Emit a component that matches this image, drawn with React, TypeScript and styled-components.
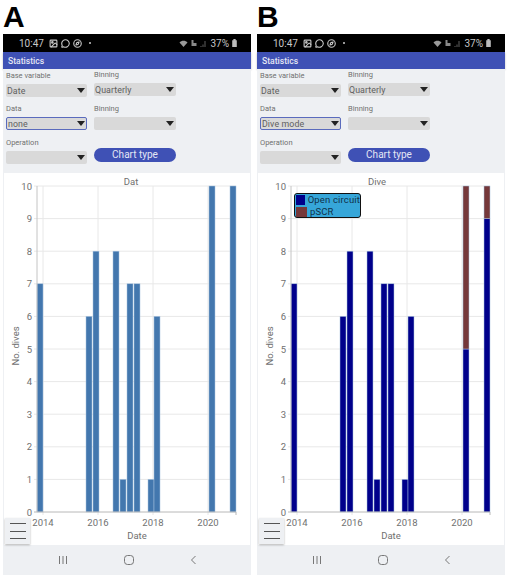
import React from 'react';
import styled, { createGlobalStyle } from 'styled-components';
import { Image, MessageCircle, Compass } from 'lucide-react';

interface Segment {
    value: number,
    color: string
}

interface Bar {
    x: number,
    segments: Segment[]
}

interface IProps {
    letter: string,
    dataValue: string,
    title: string,
    titleX: number,
    bars: Bar[],
    showLegend?: boolean
}

const GlobalStyle = createGlobalStyle`
    html, body {
        margin: 0;
        padding: 0;
        background: #fff;
        font-family: Roboto, "Liberation Sans", sans-serif;
    }
`

const Page = styled.div`
    display: flex;
    gap: 6px;
    width: 511px;
    height: 578px;
    padding-left: 3px;
    box-sizing: border-box;
`

const Panel = styled.div`
    display: flex;
    flex-direction: column;
    width: 248px;
`

const Letter = styled.div`
    height: 34px;
    font-family: "Liberation Sans", sans-serif;
    font-size: 30px;
    font-weight: 700;
    line-height: 34px;
    color: #000;
`

const StatusBar = styled.div`
    display: flex;
    align-items: center;
    height: 18px;
    padding: 0 14px 0 16px;
    background: #000;
    color: #c8c8c8;
    font-size: 10px;
`

const StatusLeft = styled.div`
    display: flex;
    align-items: center;
    gap: 3px;
`

const Time = styled.span`
    margin-right: 2px;
`

const StatusRight = styled.div`
    display: flex;
    align-items: center;
    gap: 3px;
    margin-left: auto;
`

const Dot = styled.span`
    width: 2px;
    height: 2px;
    margin-left: 4px;
    border-radius: 50%;
    background: #c8c8c8;
`

const Header = styled.div`
    display: flex;
    align-items: center;
    height: 17px;
    padding-left: 5px;
    background: #3f51b5;
    color: #e4e6f4;
    font-size: 8.6px;
    font-weight: 500;
    box-shadow: 0 1px 2px rgba(0, 0, 0, 0.25);
`

const Body = styled.div`
    display: flex;
    flex-direction: column;
    flex: none;
    height: 506px;
    background: #eef0f3;
`

const Form = styled.div`
    display: grid;
    grid-template-columns: 81px 82px;
    grid-template-rows: 34px 34px 34px;
    column-gap: 7px;
    height: 104px;
    padding-left: 3px;
    box-sizing: border-box;
`

const Field = styled.div`
    display: flex;
    flex-direction: column;
`

const FieldLabel = styled.label<{ $nudge?: number }>`
    height: 14px;
    margin-top: ${props => props.$nudge || 0}px;
    font-size: 7.5px;
    line-height: 11px;
    color: #707070;
`

const Select = styled.div<{ $focused?: boolean }>`
    display: flex;
    align-items: center;
    height: 13px;
    padding: 0 ${props => props.$focused ? 1 : 2}px 0 1px;
    box-sizing: border-box;
    border: ${props => props.$focused ? '1px solid #5a6bbd' : 'none'};
    border-radius: 2px;
    background: #d9d9d9;
    font-size: 8.8px;
    letter-spacing: 0.1px;
    color: #606060;
`

const SelectText = styled.span`
    flex: 1;
`

const Arrow = styled.span`
    border-left: 4px solid transparent;
    border-right: 4px solid transparent;
    border-top: 5px solid #222;
`

const ChartTypeButton = styled.button`
    align-self: start;
    height: 14px;
    margin-top: 11px;
    padding: 0;
    border: none;
    border-radius: 7px;
    background: #3f51b5;
    color: #e4e6f4;
    font-family: Roboto, "Liberation Sans", sans-serif;
    font-size: 10px;
    line-height: 14px;
`

const ChartCard = styled.div`
    position: relative;
    flex: none;
    width: 246px;
    height: 372px;
    margin-left: 1px;
    background: #fff;
`

const ChartSvg = styled.svg`
    display: block;
`

const AxisText = styled.text`
    font-family: Roboto, "Liberation Sans", sans-serif;
    font-size: 9.5px;
    fill: #707070;
`

const Legend = styled.div`
    position: absolute;
    left: 36px;
    top: 20px;
    display: flex;
    flex-direction: column;
    gap: 1px;
    width: 67px;
    height: 25px;
    padding: 1px 0 0 1px;
    box-sizing: border-box;
    border: 1px solid #111;
    border-radius: 3px;
    background: #36a6d9;
    font-size: 9.5px;
    line-height: 10px;
    letter-spacing: 0.15px;
    color: #10324a;
`

const LegendRow = styled.div`
    display: flex;
    align-items: center;
    gap: 2px;
    height: 10.5px;
    white-space: nowrap;
`

const LegendSwatch = styled.span<{ $color: string }>`
    width: 11px;
    height: 10px;
    margin-right: 1px;
    background: ${props => props.$color};
`

const MenuButton = styled.button`
    position: absolute;
    left: 1px;
    top: 345px;
    display: flex;
    flex-direction: column;
    justify-content: center;
    gap: 6.5px;
    width: 25px;
    height: 26px;
    padding: 0 4px 0 5px;
    box-sizing: border-box;
    border: none;
    background: #eef0f3;
    box-shadow: 0 1px 2px rgba(0, 0, 0, 0.3);
`

const MenuLine = styled.span`
    display: block;
    height: 1px;
    background: #555;
`

const NavBar = styled.div`
    display: flex;
    flex: 1;
    align-items: center;
    justify-content: space-between;
    padding: 0 54px 0 55px;
    color: #777;
`

const DIVE_BLUE = '#00008b';
const DIVE_RED = '#75383a';
const DAT_BLUE = '#4377ae';

const years = [2014, 2016, 2018, 2020];
const xForYear = (year: number) => 43 + (year - 2014) * 27.5;
const AXIS_BOTTOM = 512;
const UNIT = 32.6;

const barXs = [37, 86, 93, 113, 120, 127, 134, 148, 154, 209, 230];

const single = (values: number[], color: string): Bar[] =>
    values.map((value, i) => ({ x: barXs[i], segments: [{ value, color }] }));

const datBars = single([7, 6, 8, 8, 1, 7, 7, 1, 6, 10, 10], DAT_BLUE);

const diveBars: Bar[] = single([7, 6, 8, 8, 1, 7, 7, 1, 6, 5, 9], DIVE_BLUE).map((bar, i) =>
    i === 9 ? { ...bar, segments: [...bar.segments, { value: 5, color: DIVE_RED }] }
    : i === 10 ? { ...bar, segments: [...bar.segments, { value: 1, color: DIVE_RED }] }
    : bar);

const Chart = ({ title, titleX, bars }: { title: string, titleX: number, bars: Bar[] }) => {
    const ticks = Array.from({ length: 11 }, (_, i) => i);

    return <ChartSvg width="246" height="372" viewBox="4 173 246 372">
        <AxisText x={titleX} y="185" textAnchor="middle">{title}</AxisText>
        {ticks.filter(t => t > 0).map(t =>
            <line key={t} x1="34" x2="236" y1={AXIS_BOTTOM - t * UNIT} y2={AXIS_BOTTOM - t * UNIT} stroke="#e8e8e8" strokeWidth="1" />)}
        {years.map(y =>
            <line key={y} x1={xForYear(y)} x2={xForYear(y)} y1={AXIS_BOTTOM - 10 * UNIT} y2={AXIS_BOTTOM + 3} stroke="#e8e8e8" strokeWidth="1" />)}
        {bars.map(bar => {
            let base = AXIS_BOTTOM;
            return bar.segments.map((s, i) => {
                const h = s.value * UNIT;
                base -= h;
                return <rect key={`${bar.x}-${i}`} x={bar.x} y={base} width="6" height={h} fill={s.color} stroke="#a9c4e0" strokeWidth="0.5" />;
            });
        })}
        <line x1="37" x2="37" y1={AXIS_BOTTOM - 10 * UNIT} y2={AXIS_BOTTOM} stroke="#c4c4c4" />
        <line x1="34" x2="236" y1={AXIS_BOTTOM} y2={AXIS_BOTTOM} stroke="#b8b8b8" />
        {ticks.map(t =>
            <AxisText key={t} x="32" y={AXIS_BOTTOM - t * UNIT + 3.5} textAnchor="end">{t}</AxisText>)}
        {years.map(y =>
            <AxisText key={y} x={xForYear(y)} y="526" textAnchor="middle">{y}</AxisText>)}
        <line x1="236" x2="236" y1={AXIS_BOTTOM} y2={AXIS_BOTTOM + 3} stroke="#b8b8b8" />
        <AxisText x="137" y="539" textAnchor="middle">Date</AxisText>
        <AxisText x="19" y="346" textAnchor="middle" transform="rotate(-90 19 346)">No. dives</AxisText>
    </ChartSvg>;
}

const Phone = ({ letter, dataValue, title, titleX, bars, showLegend }: IProps) => {
    return <Panel>
        <Letter>{letter}</Letter>
        <StatusBar>
            <StatusLeft>
                <Time>10:47</Time>
                <Image size={9} strokeWidth={3} />
                <MessageCircle size={9} strokeWidth={3} />
                <Compass size={9} strokeWidth={3} />
                <Dot />
            </StatusLeft>
            <StatusRight>
                <svg width="9" height="7" viewBox="0 0 8 7">
                    <path d="M0 2.5 C2 0 6 0 8 2.5 L4 7Z" fill="#9a9a9a" />
                </svg>
                <svg width="6" height="6" viewBox="0 0 5 6">
                    <path d="M0 0h2v3h3v3H0Z" fill="#8a8a8a" />
                </svg>
                <svg width="7" height="7" viewBox="0 0 6 7">
                    <path d="M0.5 6v1M2.5 4.5V7M4.5 1V7" stroke="#777" strokeWidth="0.8" />
                </svg>
                <span>37%</span>
                <svg width="5" height="8" viewBox="0 0 4 7">
                    <path d="M1 0h2v1h1v6H0V1h1Z" fill="#bdbdbd" />
                </svg>
            </StatusRight>
        </StatusBar>
        <Header>Statistics</Header>
        <Body>
            <Form>
                <Field>
                    <FieldLabel $nudge={1}>Base variable</FieldLabel>
                    <Select><SelectText>Date</SelectText><Arrow /></Select>
                </Field>
                <Field>
                    <FieldLabel>Binning</FieldLabel>
                    <Select><SelectText>Quarterly</SelectText><Arrow /></Select>
                </Field>
                <Field>
                    <FieldLabel>Data</FieldLabel>
                    <Select $focused><SelectText>{dataValue}</SelectText><Arrow /></Select>
                </Field>
                <Field>
                    <FieldLabel>Binning</FieldLabel>
                    <Select><SelectText /><Arrow /></Select>
                </Field>
                <Field>
                    <FieldLabel>Operation</FieldLabel>
                    <Select><SelectText /><Arrow /></Select>
                </Field>
                <ChartTypeButton>Chart type</ChartTypeButton>
            </Form>
            <ChartCard>
                <Chart title={title} titleX={titleX} bars={bars} />
                {showLegend && <Legend>
                    <LegendRow><LegendSwatch $color={DIVE_BLUE} />Open circuit</LegendRow>
                    <LegendRow><LegendSwatch $color={DIVE_RED} />pSCR</LegendRow>
                </Legend>}
                <MenuButton>
                    <MenuLine />
                    <MenuLine />
                    <MenuLine />
                </MenuButton>
            </ChartCard>
            <NavBar>
                <svg width="10" height="10" viewBox="0 0 10 10">
                    <path d="M1.5 1v8M5 1v8M8.5 1v8" stroke="currentColor" strokeWidth="1" />
                </svg>
                <svg width="10" height="10" viewBox="0 0 10 10">
                    <rect x="0.5" y="0.5" width="9" height="9" rx="3" fill="none" stroke="currentColor" strokeWidth="1" />
                </svg>
                <svg width="7" height="10" viewBox="0 0 7 10">
                    <path d="M5.5 1L1.5 5L5.5 9" fill="none" stroke="currentColor" strokeWidth="1" />
                </svg>
            </NavBar>
        </Body>
    </Panel>;
}

export default function App() {
    return <>
        <GlobalStyle />
        <Page>
            <Phone letter="A" dataValue="none" title="Dat" titleX={131} bars={datBars} />
            <Phone letter="B" dataValue="Dive mode" title="Dive" titleX={123} bars={diveBars} showLegend />
        </Page>
    </>;
}
